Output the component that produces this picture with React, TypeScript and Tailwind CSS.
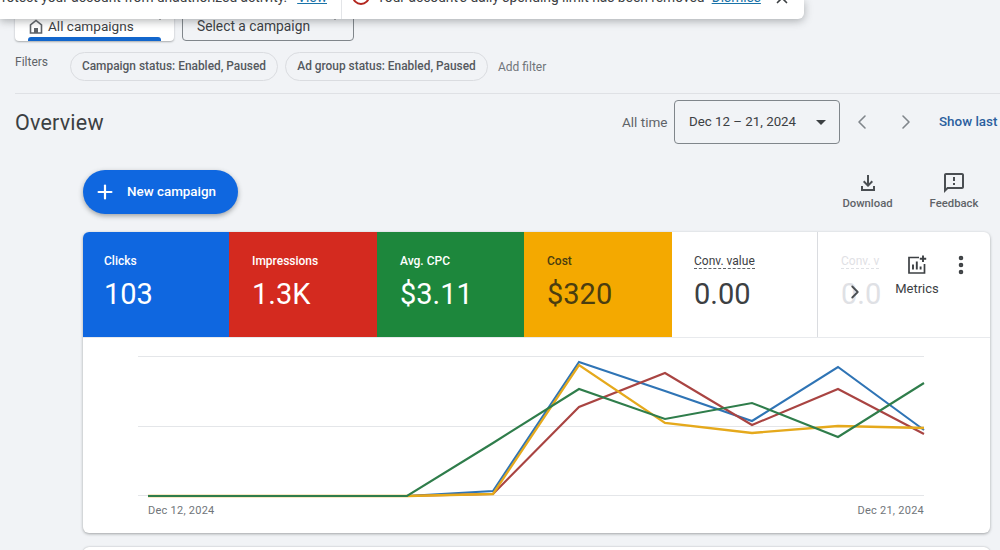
import React from "react";
import { ChevronLeft, ChevronRight, Plus, X, EllipsisVertical } from "lucide-react";

const W = 907;
const H = 162;
const ox = 83;
const oy = 338;
const xs = [148, 234, 321, 407, 493, 579, 665, 752, 838, 924];
const toPts = (ys: number[]) => ys.map((y, i) => `${xs[i] - ox},${y - oy}`).join(" ");
const series = [
  { c: "#2f74b5", y: [496, 496, 496, 496, 491, 362, 391, 421, 367, 430], w: 2.1 },
  { c: "#a94442", y: [496, 496, 496, 496, 494, 407, 373, 425, 389, 434], w: 2.1 },
  { c: "#e5a91c", y: [496, 496, 496, 496, 494, 365, 423, 433, 426, 428], w: 2.3 },
  { c: "#2f7d4b", y: [496, 496, 496, 496, 443, 389, 419, 403, 437, 383], w: 2.1 },
];

function Tile({ label, value, bg, w, pl }: { label: string; value: string; bg: string; w: string; pl: string }) {
  return (
    <div className={`${bg} ${w} ${pl} h-full shrink-0 pt-[20px] text-white`}>
      <div className="text-[12px] leading-[18px] font-medium">{label}</div>
      <div className="mt-[6px] text-[29px] leading-[36px]">{value}</div>
    </div>
  );
}

function Caret({ className }: { className: string }) {
  return <span className={`block w-0 h-0 border-l-[4px] border-r-[4px] border-t-[5px] border-l-transparent border-r-transparent ${className}`} />;
}

export default function App() {
  return (
    <div className="relative w-[1000px] h-[550px] overflow-hidden bg-[#f1f3f6] font-['Roboto',sans-serif] text-[#3c4043]">
      {/* Notification banner */}
      <div className="absolute top-0 left-0 z-20 flex h-[19px] w-[804px] rounded-br-[6px] bg-white shadow-[0_2px_8px_rgba(60,64,67,0.4)]">
        <div className="flex w-[342px] shrink-0 items-end justify-end overflow-hidden whitespace-nowrap border-r border-[#e3e5e8] pb-[12px] pr-[14px] text-[13.8px] leading-[20px]">
          <span>Protect your account from unauthorized activity.</span>
          <span className="ml-[10px] text-[#1a73a8] underline">View</span>
        </div>
        <div className="flex flex-1 items-end overflow-hidden whitespace-nowrap pb-[12px] pl-[10px] text-[13.8px] leading-[20px]">
          <span className="mb-[2px] mr-[7px] block h-[18px] w-[18px] shrink-0 rounded-full border-2 border-[#b3261e]" />
          <span>Your account's daily spending limit has been removed</span>
          <span className="ml-[7px] text-[#1a73a8] underline">Dismiss</span>
          <X className="ml-[12px] shrink-0" size={18} strokeWidth={2.2} />
        </div>
      </div>

      {/* Tabs */}
      <div className="ml-[15px] flex gap-[8px] pt-[11px]">
        <div className="relative flex h-[30px] w-[159px] items-center gap-[5px] overflow-hidden rounded-b-[4px] bg-white pl-[14px] text-[13.6px] shadow-[0_1px_2px_rgba(60,64,67,0.4)]">
          <svg width="14" height="15" viewBox="0 0 14 15" fill="none" stroke="#5f6368" strokeWidth="1.6" className="shrink-0">
            <path d="M1.5 14V6L7 1.5 12.5 6V14H1.5Z" />
            <rect x="5" y="9" width="4" height="5" fill="#5f6368" stroke="none" />
          </svg>
          <span>All campaigns</span>
          <Caret className="absolute right-[10px] top-[4px] border-t-[#3c4043]" />
          <span className="absolute bottom-0 left-[13px] h-[4px] w-[133px] rounded-t-[3px] bg-[#1266cc]" />
        </div>
        <div className="relative flex h-[30px] w-[172px] items-center rounded-b-[4px] border border-[#80868b] pl-[14px] text-[13.8px]">
          <span>Select a campaign</span>
          <Caret className="absolute right-[14px] top-[3px] border-t-[#3c4043]" />
        </div>
      </div>

      {/* Filters */}
      <div className="ml-[15px] mt-[11px] flex h-[29px] items-center text-[11.9px] font-medium">
        <span className="mb-[10px] w-[55px] text-[12px] font-normal text-[#5f6368]">Filters</span>
        <span className="flex h-[29px] w-[208px] items-center justify-center rounded-full border border-[#dadce0] text-[#55595e]">Campaign status: Enabled, Paused</span>
        <span className="ml-[7px] flex h-[29px] w-[203px] items-center justify-center rounded-full border border-[#dadce0] text-[#55595e]">Ad group status: Enabled, Paused</span>
        <span className="ml-[10px] text-[12px] font-normal text-[#70757a]">Add filter</span>
      </div>

      {/* Overview header */}
      <div className="ml-[15px] mt-[12px] flex h-[51px] items-end border-t border-[#dfe1e5]">
        <div className="flex h-[44px] w-full items-center">
          <h1 className="mt-[3px] w-[88px] shrink-0 whitespace-nowrap text-[21.5px] tracking-[0.2px] text-[#3c4043]">Overview</h1>
          <span className="ml-[519px] w-[44px] shrink-0 whitespace-nowrap text-[13.5px] text-[#5f6368]">All time</span>
          <div className="ml-[8px] flex h-[44px] w-[166px] shrink-0 items-center rounded-[4px] border border-[#80868b] pl-[14px] text-[13.3px]">
            <span className="whitespace-nowrap">Dec 12 – 21, 2024</span>
            <Caret className="ml-[20px] border-l-[5px] border-r-[5px] border-t-[#3c4043]" />
          </div>
          <ChevronLeft className="ml-[10px] shrink-0 text-[#80868b]" size={24} strokeWidth={1.6} />
          <ChevronRight className="ml-[20px] shrink-0 text-[#80868b]" size={24} strokeWidth={1.6} />
          <span className="ml-[21px] whitespace-nowrap text-[13.4px] font-medium text-[#2b5f9e]">Show last</span>
        </div>
      </div>

      {/* Actions */}
      <div className="ml-[83px] mt-[26px] flex h-[44px] w-[907px] items-start">
        <button className="flex h-[44px] w-[155px] items-center rounded-full bg-[#0f67e0] pl-[11px] text-[13.4px] font-medium text-white shadow-[0_2px_5px_rgba(60,64,67,0.45)]">
          <Plus size={22} strokeWidth={2.4} />
          <span className="ml-[11px]">New campaign</span>
        </button>
        <div className="ml-auto mt-[1px] flex gap-[36px] pr-[11px] text-[11.3px] font-medium text-[#5f6368]">
          <div className="flex w-[51px] flex-col items-center gap-[2px]">
            <svg width="24" height="24" viewBox="0 0 24 24" fill="#4a4e52">
              <path d="M12 16l-5-5 1.4-1.4 2.6 2.6V4h2v8.2l2.6-2.6L17 11l-5 5zM5 20v-5h2v3h10v-3h2v5H5z" />
            </svg>
            <span className="whitespace-nowrap leading-[14px]">Download</span>
          </div>
          <div className="flex w-[50px] flex-col items-center gap-[2px]">
            <svg width="24" height="24" viewBox="0 0 24 24" fill="#4a4e52">
              <path d="M20 2H4c-1.1 0-2 .9-2 2v18l4-4h14c1.1 0 2-.9 2-2V4c0-1.100-.9-2-2-2zm0 14H5.170L4 17.170V4h16v12zM11 12h2v2h-2zm0-6h2v4h-2z" />
            </svg>
            <span className="whitespace-nowrap leading-[14px]">Feedback</span>
          </div>
        </div>
      </div>

      {/* Card */}
      <div className="ml-[83px] mt-[18px] h-[301px] w-[907px] overflow-hidden rounded-[6px] bg-white shadow-[0_1px_3px_rgba(60,64,67,0.45)]">
        <div className="relative flex h-[106px] border-b border-[#e8eaed]">
          <Tile label="Clicks" value="103" bg="bg-[#0f67e0]" w="w-[146px]" pl="pl-[21px]" />
          <Tile label="Impressions" value="1.3K" bg="bg-[#d42a1f]" w="w-[148px]" pl="pl-[23px]" />
          <Tile label="Avg. CPC" value="$3.11" bg="bg-[#1d873c]" w="w-[147px]" pl="pl-[23px]" />
          <div className="h-full w-[148px] shrink-0 bg-[#f4a900] pl-[23px] pt-[20px] text-[#4a3d10]">
            <div className="text-[12px] leading-[18px] font-medium">Cost</div>
            <div className="mt-[6px] text-[29px] leading-[36px]">$320</div>
          </div>
          <div className="h-full w-[146px] shrink-0 border-r border-[#dadce0] pl-[22px] pt-[20px]">
            <div className="h-[18px] text-[12px] leading-[18px]">
              <span className="border-b border-dashed border-[#5f6368]">Conv. value</span>
            </div>
            <div className="mt-[6px] text-[29px] leading-[36px]">0.00</div>
          </div>
          <div className="h-full flex-1 overflow-hidden pl-[23px] pt-[20px] text-[#dfe1e5]">
            <div className="h-[18px] text-[12px] leading-[18px]">
              <span className="border-b border-dashed border-[#dfe1e5]">Conv. v</span>
            </div>
            <div className="mt-[6px] text-[29px] leading-[36px]">0.0</div>
          </div>

          {/* Metrics overlay */}
          <ChevronRight className="absolute left-[761px] top-[49px] text-[#4a4e52]" size={22} strokeWidth={2} />
          <div className="absolute left-[805px] top-[23px] flex w-[58px] flex-col items-center gap-[4px] text-[13px] text-[#3c4043]">
            <svg width="20" height="20" viewBox="0 0 20 20" fill="none" stroke="#3c4043" strokeWidth="1.7">
              <path d="M12 2.500H2V18H17.500V9" />
              <path d="M6 14.500V9.500M9.800 14.500V6.500M13.600 14.500V11.500" strokeWidth="1.9" />
              <path d="M16 0.500V7M12.800 3.800H19.200" strokeWidth="1.9" />
            </svg>
            <span>Metrics</span>
          </div>
          <EllipsisVertical className="absolute left-[866px] top-[21px] text-[#3c4043]" size={24} strokeWidth={2.6} />
        </div>

        <svg width={W} height={H} viewBox={`0 0 ${W} ${H}`} className="block" fill="none">
          <path d={`M55 18.500H${924 - ox}M55 88.500H${924 - ox}M55 157.500H${924 - ox}`} stroke="#e4e6e9" strokeWidth="1" />
          {series.map((s) => (
            <polyline key={s.c} points={toPts(s.y)} stroke={s.c} strokeWidth={s.w} strokeLinejoin="miter" />
          ))}
        </svg>
        <div className="mt-[3px] flex justify-between pl-[65px] pr-[66px] text-[11px] tracking-[0.25px] text-[#70757a]">
          <span>Dec 12, 2024</span>
          <span>Dec 21, 2024</span>
        </div>
      </div>

      {/* Next card, cut off */}
      <div className="ml-[83px] mt-[14px] h-[20px] w-[907px] rounded-t-[6px] bg-white shadow-[0_0_2px_rgba(60,64,67,0.4)]" />
    </div>
  );
}
